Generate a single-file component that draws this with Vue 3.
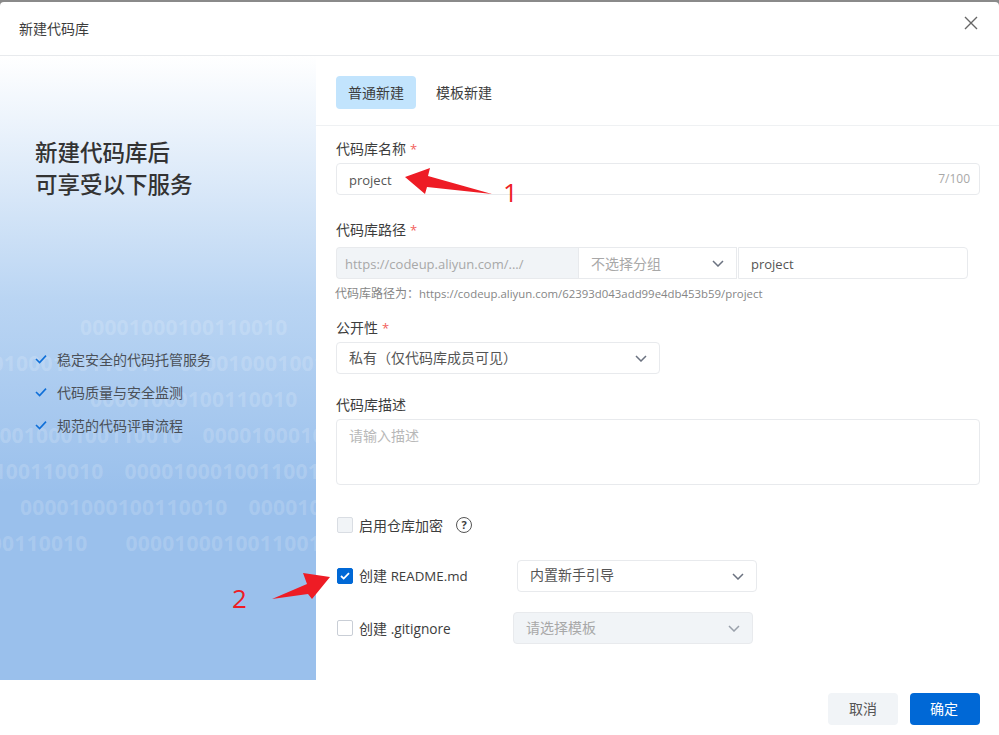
<script setup>
const bits = '00001000100110010'
const binaryRows = [
  { left: 80, gap: 0, texts: [bits] },
  { left: -45, gap: 17, texts: [bits, bits] },
  { left: 90, gap: 0, texts: [bits] },
  { left: -25, gap: 20, texts: [bits, bits] },
  { left: -104, gap: 21, texts: [bits, bits] },
  { left: 20, gap: 21, texts: [bits, bits] },
  { left: -120, gap: 38, texts: [bits, bits] }
]
const services = ['稳定安全的代码托管服务', '代码质量与安全监测', '规范的代码评审流程']
</script>

<template>
  <div class="modal">
    <header class="head">
      <span class="title">新建代码库</span>
      <svg class="close" width="14" height="14" viewBox="0 0 14 14"><path d="M1 1l12 12M13 1L1 13" stroke="#666" stroke-width="1.4" fill="none" /></svg>
    </header>

    <div class="body">
      <aside class="side">
        <div class="binary">
          <div v-for="(row, i) in binaryRows" :key="i" class="bin-row" :style="{ marginLeft: row.left + 'px', gap: row.gap + 'px' }">
            <span v-for="(t, j) in row.texts" :key="j">{{ t }}</span>
          </div>
        </div>
        <h2 class="side-title">新建代码库后<br />可享受以下服务</h2>
        <ul class="services">
          <li v-for="s in services" :key="s">
            <svg width="12" height="10" viewBox="0 0 12 10"><path d="M1 5l3.6 3.6L11 1.6" stroke="#0f6fd8" stroke-width="1.6" fill="none" /></svg>
            <span>{{ s }}</span>
          </li>
        </ul>
      </aside>

      <main class="main">
        <nav class="tabs">
          <span class="tab active">普通新建</span>
          <span class="tab">模板新建</span>
        </nav>

        <form class="form" @submit.prevent>
          <label class="label l1">代码库名称<i>*</i></label>
          <div class="box full name"><span class="latin">project</span><em>7/100</em></div>

          <label class="label l2">代码库路径<i>*</i></label>
          <div class="path">
            <div class="box prefix latin">https://codeup.aliyun.com/.../</div>
            <div class="box group">
              <span>不选择分组</span>
              <svg class="chev" width="12" height="7" viewBox="0 0 12 7"><path d="M1 1l5 5 5-5" stroke="#6b7280" stroke-width="1.5" fill="none" /></svg>
            </div>
            <div class="box repo latin">project</div>
          </div>
          <p class="hint">代码库路径为：<span>https://codeup.aliyun.com/62393d043add99e4db453b59/project</span></p>

          <label class="label l3">公开性<i>*</i></label>
          <div class="box select vis">
            <span>私有（仅代码库成员可见）</span>
            <svg class="chev" width="12" height="7" viewBox="0 0 12 7"><path d="M1 1l5 5 5-5" stroke="#6b7280" stroke-width="1.5" fill="none" /></svg>
          </div>

          <label class="label l4">代码库描述</label>
          <div class="box full desc">请输入描述</div>

          <div class="row r1">
            <span class="check disabled"></span>
            <span class="check-text">启用仓库加密</span>
            <span class="help">?</span>
          </div>
          <div class="row r2">
            <span class="check on">
              <svg width="10" height="8" viewBox="0 0 10 8"><path d="M1 4l2.7 2.6L9 1.2" stroke="#fff" stroke-width="1.8" fill="none" /></svg>
            </span>
            <span class="check-text w-readme">创建 <span class="latin-sm">README.md</span></span>
            <div class="box select tpl">
              <span>内置新手引导</span>
              <svg class="chev" width="12" height="7" viewBox="0 0 12 7"><path d="M1 1l5 5 5-5" stroke="#6b7280" stroke-width="1.5" fill="none" /></svg>
            </div>
          </div>
          <div class="row r3">
            <span class="check"></span>
            <span class="check-text w-ignore">创建 <span class="latin-md">.gitignore</span></span>
            <div class="box select tpl off">
              <span>请选择模板</span>
              <svg class="chev" width="12" height="7" viewBox="0 0 12 7"><path d="M1 1l5 5 5-5" stroke="#9aa1ab" stroke-width="1.5" fill="none" /></svg>
            </div>
          </div>
        </form>
      </main>
    </div>

    <footer class="foot">
      <button class="btn cancel" type="button">取消</button>
      <button class="btn ok" type="button">确定</button>
    </footer>

    <svg class="marks" width="999" height="735" viewBox="0 0 999 735">
      <polygon points="405,177 430,168 428,176 492,194 427,187 425,194" fill="#ee1c25" />
      <polygon points="330,577 303,573 307,584 272,599 308,594 312,599" fill="#ee1c25" />
    </svg>
    <span class="num n1">1</span>
    <span class="num n2">2</span>
  </div>
</template>

<style>
html, body { margin: 0; background: #8a8a8a; overflow: hidden; }
</style>

<style scoped>
.modal {
  position: relative;
  box-sizing: border-box;
  height: 733px;
  margin-top: 2px;
  display: flex;
  flex-direction: column;
  background: #fff;
  border-radius: 4px 4px 0 0;
  overflow: hidden;
  font-family: "Open Sans", "Noto Sans CJK SC", sans-serif;
  font-size: 14px;
  color: #3d3d3d;
}
.head {
  flex: none;
  box-sizing: border-box;
  height: 54px;
  border-bottom: 1px solid #e8eaed;
  padding: 0 21px 0 19px;
  display: flex;
  align-items: center;
  justify-content: space-between;
}
.title { line-height: 54px; }
.close { margin-top: -12px; }
.body { flex: none; height: 624px; display: flex; }
.side {
  position: relative;
  flex: none;
  width: 316px;
  box-sizing: border-box;
  padding: 81px 0 0 35px;
  overflow: hidden;
  background: linear-gradient(180deg, #fff 0%, #bad5f3 39%, #9ac0ec 70%, #9ac0ec 100%);
}
.binary { position: absolute; top: 253px; left: 0; width: 316px; }
.bin-row {
  display: flex;
  width: 900px;
  height: 36px;
  line-height: 36px;
  font-size: 21px;
  font-weight: 700;
  color: rgba(255, 255, 255, 0.17);
  letter-spacing: 0.2px;
  white-space: nowrap;
}
.side-title {
  position: relative;
  margin: 0;
  font-size: 22.5px;
  line-height: 32px;
  font-weight: 500;
  color: #333;
}
.services {
  position: relative;
  list-style: none;
  margin: 141px 0 0;
  padding: 0;
  color: #4a5058;
}
.services li { display: flex; align-items: center; gap: 10px; height: 33px; }
.main { flex: 1; min-width: 0; }
.tabs {
  box-sizing: border-box;
  height: 70px;
  padding: 20px 0 0 20px;
  display: flex;
  gap: 8px;
  border-bottom: 1px solid #eff1f3;
}
.tab { width: 80px; height: 33px; line-height: 33px; text-align: center; border-radius: 4px; }
.tab.active { background: #c2e4fd; }
.form { padding: 13px 19px 0 20px; display: flex; flex-direction: column; align-items: flex-start; }
.label { display: block; height: 20px; line-height: 20px; }
.label i { font-style: normal; color: #f25f5c; margin-left: 4px; font-size: 13px; }
.l1 { margin-bottom: 4px; }
.l2 { margin-top: 25px; margin-bottom: 7px; }
.l3 { margin-top: 16px; margin-bottom: 4px; }
.l4 { margin-top: 21px; margin-bottom: 4px; }
.box {
  box-sizing: border-box;
  height: 32px;
  line-height: 30px;
  border: 1px solid #e8eaed;
  border-radius: 4px;
  padding: 0 12px;
  color: #555;
  background: #fff;
}
.latin { font-size: 13px; line-height: 32px; }
.latin-sm { font-size: 13.3px; }
.latin-md { font-size: 13.7px; }
.full { width: 644px; }
.name { display: flex; justify-content: space-between; }
.name em { font-style: normal; font-size: 12px; color: #a8a8a8; margin-right: -3px; }
.path { display: flex; }
.prefix { width: 242px; padding: 0 8px; background: #f1f4f7; color: #a8a8a8; border-radius: 4px 0 0 4px; border-right: 0; white-space: nowrap; overflow: hidden; }
.group { width: 159px; display: flex; align-items: center; justify-content: space-between; color: #a8a8a8; border-radius: 0; padding-right: 12px; }
.group span { margin-top: 2px; }
.repo { width: 230px; border-radius: 0 4px 4px 0; margin-left: 1px; }
.hint { margin: 7px 0 0 -1px; height: 16px; line-height: 16px; font-size: 12px; color: #868686; white-space: nowrap; }
.hint span { font-size: 11.4px; }
.select { display: flex; align-items: center; justify-content: space-between; }
.vis { width: 324px; }
.desc { height: 66px; color: #b8b8b8; line-height: 32px; }
.row { display: flex; align-items: center; height: 32px; }
.r1 { margin-top: 24px; }
.r2 { margin-top: 19px; }
.r3 { margin-top: 20px; }
.r2 .check-text, .r2 .select span { margin-top: -2px; }
.check {
  flex: none;
  box-sizing: border-box;
  width: 16px;
  height: 16px;
  margin-left: 1px;
  border: 1px solid #c9ced6;
  border-radius: 2px;
  display: flex;
  align-items: center;
  justify-content: center;
  background: #fff;
}
.check.disabled { background: #f1f4f7; border-color: #d9dde3; }
.check.on { background: #0068d6; border-color: #0068d6; }
.check-text { margin-left: 6px; }
.w-readme { width: 158px; }
.w-ignore { width: 154px; }
.help {
  box-sizing: border-box;
  width: 16px;
  height: 16px;
  margin-left: 13px;
  border: 1.5px solid #555;
  border-radius: 50%;
  font-size: 11px;
  font-weight: 700;
  line-height: 13px;
  text-align: center;
}
.tpl { width: 240px; }
.tpl.off { background: #f1f4f7; color: #a8a8a8; }
.foot {
  flex: 1;
  display: flex;
  justify-content: flex-end;
  gap: 12px;
  padding: 13px 19px 0 0;
}
.btn {
  width: 70px;
  height: 32px;
  border: 0;
  border-radius: 4px;
  font: inherit;
  padding: 0 0 2px;
}
.cancel { background: #f1f4f7; color: #555; }
.ok { background: #0068d6; color: #fff; padding-right: 2px; }
.marks { position: absolute; left: 0; top: -2px; pointer-events: none; }
.num {
  position: absolute;
  font-family: "Open Sans", sans-serif;
  font-weight: 400;
  font-size: 26px;
  line-height: 30px;
  color: #ee1c25;
}
.n1 { left: 503px; top: 175px; }
.n2 { left: 232px; top: 581px; }
</style>
